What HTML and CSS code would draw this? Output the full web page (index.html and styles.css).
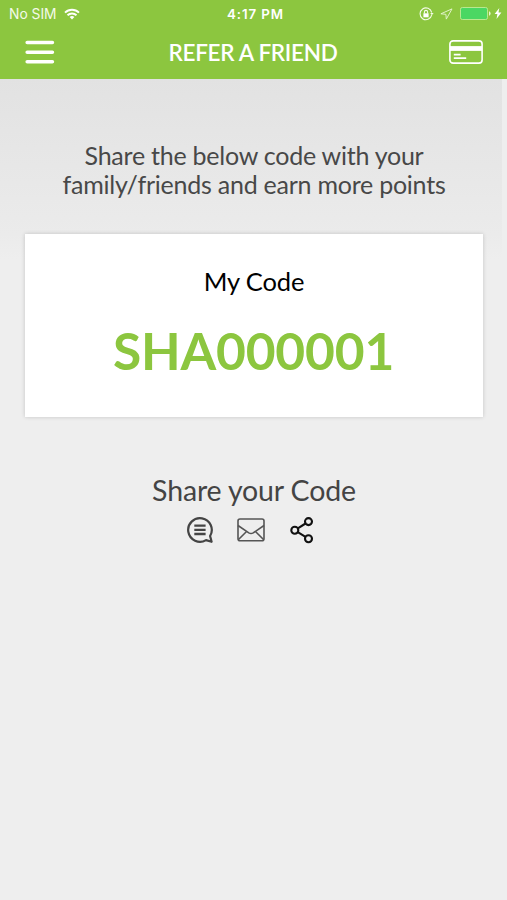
FILE: index.html
```html
<!DOCTYPE html>
<html lang="en">
<head>
<meta charset="utf-8">
<title>Refer a Friend</title>
<link rel="stylesheet" href="styles.css">
</head>
<body>
<div class="screen">
  <header class="header">
    <div class="status">
      <div class="carrier">
        <span>No SIM</span>
        <svg class="wifi" width="16" height="12" viewBox="0 0 16 12" fill="none" stroke="#fff" stroke-width="1.9"><path d="M1 4.6a10 10 0 0 1 14 0M3.5 7.3a6.4 6.4 0 0 1 9 0"/><path d="M8 11.5 5.6 9.1a3.4 3.4 0 0 1 4.8 0z" fill="#fff" stroke="none"/></svg>
      </div>
      <time class="clock">4:17 PM</time>
      <div class="indicators">
        <svg width="15" height="14" viewBox="0 0 15 14" fill="none" stroke="#f4fbe9" stroke-width="1.1"><path d="M12.700 8.200A5.900 5.900 0 1 1 12.700 5.500"/><path d="M11.200 6h3.400l-1.700 2.200z" fill="#f4fbe9" stroke="none"/><path d="M5.400 6.500V5a1.600 1.600 0 0 1 3.200 0v1.500"/><path d="M4.400 6.300h5.200v4H4.400z" fill="#fff" stroke="none"/></svg>
        <svg class="locate" width="13" height="12" viewBox="0 0 13 12" fill="none" stroke="#e2f2c9" stroke-width="1"><path d="M12 .9.9 5.8l5 .5.4 4.8z"/></svg>
        <svg class="battery" width="31" height="13" viewBox="0 0 31 13"><rect x=".5" y=".5" width="27" height="12" rx="1.8" fill="#4bd763" stroke="#b9e88f"/><path d="M29 4.3q1.6.5 1.6 2.2T29 8.7z" fill="#e7f7d6"/></svg>
        <svg class="bolt" width="8" height="11" viewBox="0 0 8 11"><path d="M5.3 0 .6 6h2.800L2.500 11 7.400 4.600H4.500z" fill="#fff"/></svg>
      </div>
    </div>
    <nav class="bar">
      <svg class="menu" width="30" height="24" viewBox="0 0 30 24" stroke="#fff" stroke-width="3.6" stroke-linecap="round"><path d="M2.200 2.500h25.200M2.200 12.200h25.200M2.200 21.800h25.200"/></svg>
      <h1 class="title">REFER A FRIEND</h1>
      <svg class="card-icon" width="34" height="24" viewBox="0 0 34 24" fill="none" stroke="#fff"><rect x=".9" y=".9" width="32.200" height="22.200" rx="3.200" stroke-width="1.600"/><path d="M1 8.500h32" stroke-width="4.800"/><path d="M4.800 14.600h6.800M4.800 18.100h12.400" stroke-width="1.700"/></svg>
    </nav>
  </header>
  <main class="content">
    <p class="intro">Share the below code with your<br>family/friends and earn more points</p>
    <section class="code-card">
      <h2 class="label">My Code</h2>
      <strong class="code">SHA000001</strong>
    </section>
    <section class="share">
      <h2 class="share-title">Share your Code</h2>
      <div class="actions">
        <svg width="28" height="28" viewBox="0 0 28 28" fill="none" stroke="#444" stroke-width="2.200"><path d="M24.100 20A11.800 11.800 0 1 0 20 24.100L25.600 25.800z" stroke-linejoin="round"/><path d="M8.300 9.600h11.300M8.300 13.800h11.300M8.300 18h11.300" stroke-width="2.300"/></svg>
        <svg width="28" height="24" viewBox="0 0 28 24" fill="none" stroke="#555" stroke-width="1.600"><rect x="1" y="1" width="26" height="21.800" rx="2"/><path d="M1 7.500 11.800 14.900q2.200 1.300 4.400 0L27 7.500M1.500 21.500 9.800 13.200M26.500 21.500 18.200 13.200"/></svg>
        <svg width="24" height="28" viewBox="0 0 24 28" fill="none" stroke="#111" stroke-width="2.100"><circle cx="4.800" cy="14.300" r="3.500"/><circle cx="18.500" cy="5.600" r="3.500"/><circle cx="18.500" cy="22.700" r="3.500"/><path d="m7.800 12.400 7.700-4.900M7.800 16.200l7.700 4.700"/></svg>
      </div>
    </section>
  </main>
</div>
</body>
</html>
```
FILE: styles.css
```css
* { box-sizing: border-box; margin: 0; }
body { font-family: Lato, sans-serif; }
svg { display: block; flex: none; }
.screen { height: 900px; overflow: hidden; background: #eee; }
.header { height: 79px; background: #8cc63f; color: #fff; }
.status { height: 27px; display: grid; grid-template-columns: 1fr auto 1fr; align-items: center; padding: 0 5px 0 9px; font: 13.3px/26px Inter, sans-serif; }
.carrier { display: flex; align-items: center; gap: 7px; color: #f3fae8; }
.carrier span { font-size: 13.8px; padding-top: 1px; }
.clock { font-weight: 600; font-size: 13.3px; letter-spacing: .9px; padding-top: 1px; }
.indicators { display: flex; align-items: center; justify-content: flex-end; }
.locate { margin-left: 6px; }
.battery { margin-left: 7px; }
.bolt { margin-left: 3px; }
.bar { height: 52px; display: flex; align-items: flex-start; justify-content: space-between; padding: 13px 24px 0 25px; }
.title { font-size: 22.5px; font-weight: 600; line-height: 26px; letter-spacing: -.3px; padding-left: 2px; }
.content {
  height: 821px;
  padding: 62px 24px 0 25px;
  background:
    linear-gradient(#eee, #eee) right top / 5px 100% no-repeat,
    linear-gradient(#e2e2e2, #ebebeb 155px, #eee 180px);
}
.intro { font-size: 25px; line-height: 29px; letter-spacing: -.24px; text-align: center; color: #484848; }
.code-card { height: 183px; margin-top: 35px; padding-top: 30px; background: #fff; box-shadow: 0 0 4px rgba(0,0,0,.18); text-align: center; }
.label { font-size: 25.5px; font-weight: 400; line-height: 34px; letter-spacing: -.1px; color: #000; }
.code { display: block; margin-top: 20px; font-size: 51.500px; font-weight: 700; line-height: 64px; letter-spacing: -.2px; padding-right: 1px; color: #8cc63f; }
.share { margin-top: 55px; text-align: center; }
.share-title { font-size: 28.5px; font-weight: 400; line-height: 36px; letter-spacing: -.15px; color: #444; }
.actions { display: flex; align-items: center; justify-content: center; gap: 24px; margin: 8px 8px 0 0; }
.actions svg:first-child { margin-right: -1px; }
.actions svg:last-child { margin-left: 1px; }
```
